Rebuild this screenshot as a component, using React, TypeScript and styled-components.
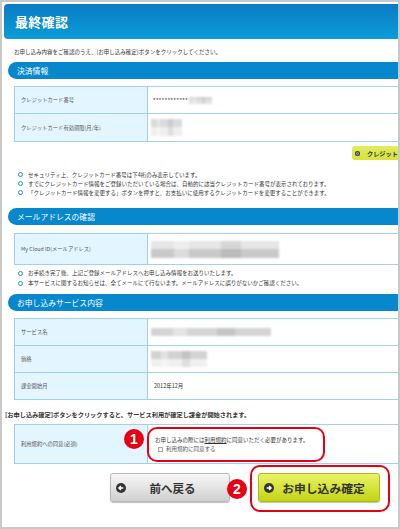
import React from 'react'
import styled, { createGlobalStyle } from 'styled-components'

const GlobalStyle = createGlobalStyle`
  html, body {
    margin: 0;
    padding: 0;
    background: #fff;
  }
  body {
    font-family: "Noto Sans CJK JP", "Liberation Sans", sans-serif;
    color: #333;
  }
`

const Frame = styled.div`
  width: 400px;
  height: 529px;
  box-sizing: border-box;
  border: 2px solid #c9c9c9;
  overflow: hidden;
  background: #fff;
`

const Canvas = styled.div`
  width: 640px;
`

const PageHeader = styled.h1`
  margin: 2px 0 0 2px;
  height: 35px;
  padding-left: 11px;
  border-radius: 4px 0 0 4px;
  background: linear-gradient(#0a7bc4, #0b8fd0 60%, #0d9dd8);
  color: #fff;
  font-size: 13px;
  font-weight: bold;
  line-height: 35px;
  letter-spacing: 0.3px;
`

const TextLine = styled.p<{ $top: number; $left: number; $bold?: boolean }>`
  margin: ${p => p.$top}px 0 0 ${p => p.$left}px;
  font-size: ${p => (p.$bold ? 6.2 : 5.5)}px;
  font-weight: ${p => (p.$bold ? 'bold' : 'normal')};
  line-height: 10px;
  white-space: nowrap;
  color: #333;
`

const SectionTitle = styled.h2<{ $top: number }>`
  margin: ${p => p.$top}px 0 0 6px;
  height: 17px;
  padding-left: 9px;
  border-radius: 9px 0 0 9px;
  background: #0788cd;
  color: #fff;
  font-size: 7.8px;
  font-weight: normal;
  line-height: 17px;
`

const InfoTable = styled.div<{ $top: number }>`
  margin: ${p => p.$top}px 0 0 12px;
  width: 600px;
  border-top: 1px solid #9fd0f1;
  border-left: 1px solid #9fd0f1;
`

const Row = styled.div<{ $h: number }>`
  display: flex;
  height: ${p => p.$h}px;
  border-bottom: 1px solid #9fd0f1;
`

const Label = styled.div`
  width: 133px;
  flex: none;
  display: flex;
  align-items: center;
  padding-left: 6px;
  box-sizing: border-box;
  border-right: 1px solid #9fd0f1;
  background: #e3f5fe;
  font-size: 5.3px;
  color: #555;
  white-space: nowrap;
`

const Value = styled.div<{ $pad: number; $top?: boolean }>`
  flex: 1;
  display: flex;
  flex-direction: column;
  justify-content: ${p => (p.$top ? 'flex-start' : 'center')};
  padding-left: ${p => p.$pad}px;
  font-size: 5.5px;
  color: #333;
  white-space: nowrap;
`

const Masked = styled.div`
  display: flex;
  align-items: center;
  gap: 1px;
  span {
    letter-spacing: 0.6px;
    font-family: "Liberation Sans", sans-serif;
    font-size: 6px;
  }
`

const Redacted = styled.div<{ $w: number; $h: number; $a: string; $b: string }>`
  width: ${p => p.$w}px;
  height: ${p => p.$h}px;
  background:
    linear-gradient(90deg, transparent 0 18%, rgba(255,255,255,0.35) 18% 30%, transparent 30% 55%, rgba(0,0,0,0.07) 55% 70%, transparent 70%),
    linear-gradient(${p => p.$a} 0 50%, ${p => p.$b} 50% 100%);
  filter: blur(0.8px);
`

const CreditRow = styled.div`
  margin: 4px 0 0 350px;
`

const CreditButton = styled.div`
  display: flex;
  align-items: center;
  gap: 7px;
  width: 140px;
  height: 14px;
  padding-left: 3px;
  border-radius: 3px;
  background: linear-gradient(#e2ec5e, #d5e33e);
  font-size: 6.2px;
  font-weight: bold;
  color: #333;
  white-space: nowrap;
`

const TinyIcon = styled.span`
  width: 5px;
  height: 5px;
  border-radius: 50%;
  background: #444;
  box-shadow: inset 0 0 0 1.2px #444, inset 0 0 0 2px #bbb;
`

const Notes = styled.ul<{ $top: number; $lh: number }>`
  margin: ${p => p.$top}px 0 0 16px;
  padding: 0;
  list-style: none;
  li {
    display: flex;
    align-items: center;
    gap: 5px;
    height: ${p => p.$lh}px;
    font-size: 5.5px;
    color: #333;
    white-space: nowrap;
  }
  li::before {
    content: '';
    width: 5px;
    height: 5px;
    box-sizing: border-box;
    border: 1.5px solid #1a8fd6;
    border-radius: 50%;
    flex: none;
  }
`

const Callout = styled.div`
  position: relative;
  width: 178px;
  height: 35px;
  margin: 2px 0 0 -1px;
  box-sizing: border-box;
  padding: 7px 0 0 6px;
  border: 2px solid #e60012;
  border-radius: 10px;
  line-height: 9px;
  font-size: 5.5px;
  color: #333;
  u {
    text-decoration: underline;
  }
`

const CheckLine = styled.label`
  display: flex;
  align-items: center;
  gap: 3px;
  padding-left: 3px;
  height: 9px;
  color: #555;
`

const CheckBox = styled.span`
  width: 5px;
  height: 5px;
  box-sizing: border-box;
  border: 1px solid #aaa;
  background: #f4f4f4;
`

const Badge = styled.span<{ $left: number; $top: number }>`
  position: absolute;
  left: ${p => p.$left}px;
  top: ${p => p.$top}px;
  width: 20px;
  height: 20px;
  border-radius: 50%;
  background: #e60012;
  color: #fff;
  font-family: "Liberation Sans", sans-serif;
  font-size: 14px;
  font-weight: bold;
  line-height: 20px;
  text-align: center;
`

const ButtonRow = styled.div`
  display: flex;
  align-items: flex-start;
  gap: 20px;
  margin: 1px 0 0 108px;
`

const ActionButton = styled.button<{ $kind: 'back' | 'go'; $w: number }>`
  display: flex;
  align-items: center;
  width: ${p => p.$w}px;
  height: 29px;
  margin-top: ${p => (p.$kind === 'back' ? 8 : 0)}px;
  padding: 0 0 0 5px;
  box-sizing: border-box;
  border: 1px solid ${p => (p.$kind === 'back' ? '#b9b9b9' : '#a9bb14')};
  border-radius: 3px;
  background: ${p =>
    p.$kind === 'back'
      ? 'linear-gradient(#f6f6f6, #e4e4e4 50%, #cfcfcf)'
      : 'linear-gradient(#e9f26a, #d7e53a 50%, #c2d316)'};
  box-shadow: 0 1px 1px rgba(0, 0, 0, 0.25);
  font-family: "Noto Sans CJK JP", sans-serif;
  font-size: ${p => (p.$kind === 'back' ? 11.5 : 11.8)}px;
  font-weight: bold;
  color: #333;
  cursor: pointer;
  span {
    flex: 1;
    text-align: center;
    padding-right: ${p => (p.$kind === 'back' ? 10 : 6)}px;
  }
`

const Highlight = styled.div`
  position: relative;
  padding: 6px 8px 8px 6px;
  border: 2px solid #e60012;
  border-radius: 10px;
`

const Arrow = ({ dir }: { dir: 'left' | 'right' }) => (
  <svg width="10" height="10" viewBox="0 0 10 10">
    <circle cx="5" cy="5" r="5" fill="#333" />
    {dir === 'left' ? (
      <path d="M7.3 5H3M4.9 3.1L3 5l1.9 1.9" stroke="#fff" strokeWidth="1.5" fill="none" />
    ) : (
      <path d="M2.7 5H7M5.1 3.1L7 5 5.1 6.9" stroke="#fff" strokeWidth="1.5" fill="none" />
    )}
  </svg>
)

export default function App() {
  return (
    <>
      <GlobalStyle />
      <Frame>
        <Canvas>
          <PageHeader>最終確認</PageHeader>
          <TextLine $top={8} $left={12}>
            お申し込み内容をご確認のうえ、[お申し込み確定]ボタンをクリックしてください。
          </TextLine>

          <SectionTitle $top={5}>決済情報</SectionTitle>
          <InfoTable $top={7}>
            <Row $h={26}>
              <Label>クレジットカード番号</Label>
              <Value $pad={5}>
                <Masked>
                  <span>************</span>
                  <Redacted $w={23} $h={7} $a="#d6d6d6" $b="#e2e2e2" />
                </Masked>
              </Value>
            </Row>
            <Row $h={27}>
              <Label>クレジットカード有効期限(月/年)</Label>
              <Value $pad={3}>
                <Redacted $w={31} $h={17} $a="#dadada" $b="#efefef" />
              </Value>
            </Row>
          </InfoTable>

          <CreditRow>
            <CreditButton>
              <TinyIcon />
              クレジット
            </CreditButton>
          </CreditRow>

          <Notes $top={10} $lh={9}>
            <li>セキュリティ上、クレジットカード番号は下4桁のみ表示しています。</li>
            <li>すでにクレジットカード情報をご登録いただいている場合は、自動的に該当クレジットカード番号が表示されております。</li>
            <li>「クレジットカード情報を変更する」ボタンを押すと、お支払いに使用するクレジットカードを変更することができます。</li>
          </Notes>

          <SectionTitle $top={11}>メールアドレスの確認</SectionTitle>
          <InfoTable $top={8}>
            <Row $h={30}>
              <Label>My Cloud ID(メールアドレス)</Label>
              <Value $pad={3}>
                <Redacted $w={128} $h={17} $a="#e6e6e6" $b="#c9c9c9" />
              </Value>
            </Row>
          </InfoTable>

          <Notes $top={3} $lh={10}>
            <li>お手続き完了後、上記ご登録メールアドレスへお申し込み情報をお送りいたします。</li>
            <li>本サービスに関するお知らせは、全てメールにて行ないます。メールアドレスに誤りがないかご確認ください。</li>
          </Notes>

          <SectionTitle $top={6}>お申し込みサービス内容</SectionTitle>
          <InfoTable $top={7}>
            <Row $h={26}>
              <Label>サービス名</Label>
              <Value $pad={3}>
                <Redacted $w={120} $h={8} $a="#d4d4d4" $b="#d4d4d4" />
              </Value>
            </Row>
            <Row $h={26}>
              <Label>価格</Label>
              <Value $pad={3}>
                <Redacted $w={56} $h={16} $a="#d2d2d2" $b="#f0f0f0" />
              </Value>
            </Row>
            <Row $h={26}>
              <Label>課金開始月</Label>
              <Value $pad={6}>2012年12月</Value>
            </Row>
          </InfoTable>

          <TextLine $top={10} $left={3} $bold>
            [お申し込み確定]ボタンをクリックすると、サービス利用が確定し課金が開始されます。
          </TextLine>

          <InfoTable $top={4}>
            <Row $h={38}>
              <Label>利用規約への同意(必須)</Label>
              <Value $pad={0} $top>
                <Callout>
                  <Badge $left={-25} $top={0}>1</Badge>
                  <div>
                    お申し込みの際には<u>利用規約</u>に同意いただく必要があります。
                  </div>
                  <CheckLine>
                    <CheckBox />
                    利用規約に同意する
                  </CheckLine>
                </Callout>
              </Value>
            </Row>
          </InfoTable>

          <ButtonRow>
            <ActionButton $kind="back" $w={120}>
              <Arrow dir="left" />
              <span>前へ戻る</span>
            </ActionButton>
            <Highlight>
              <Badge $left={-25} $top={12}>2</Badge>
              <ActionButton $kind="go" $w={122}>
                <Arrow dir="right" />
                <span>お申し込み確定</span>
              </ActionButton>
            </Highlight>
          </ButtonRow>
        </Canvas>
      </Frame>
    </>
  )
}
